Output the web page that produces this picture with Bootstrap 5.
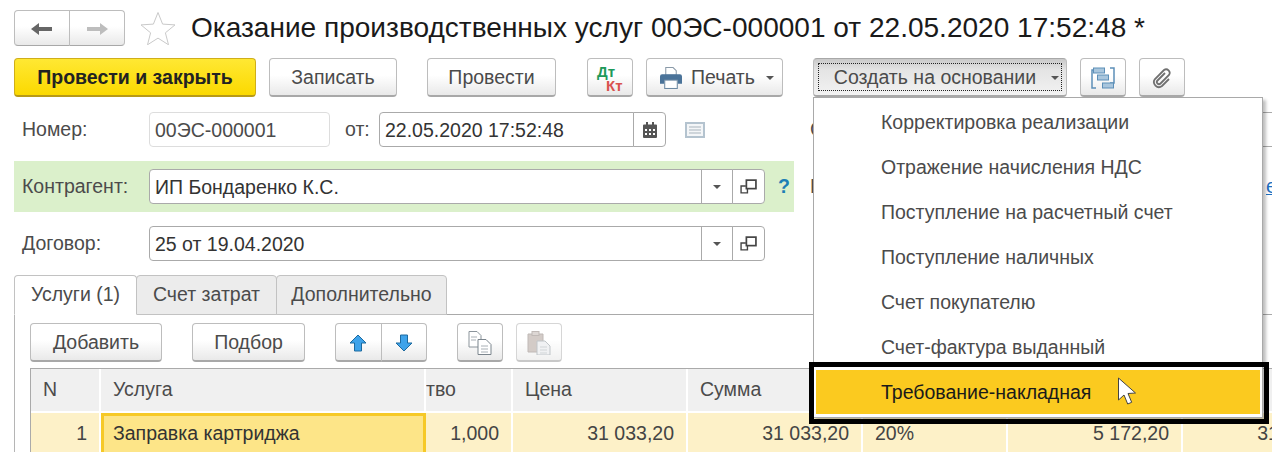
<!DOCTYPE html>
<html lang="ru">
<head>
  <meta charset="UTF-8" />
  <meta name="viewport" content="width=device-width, initial-scale=1.0" />
  <title>Оказание производственных услуг</title>
  <link rel="stylesheet" href="https://cdn.jsdelivr.net/npm/bootstrap@5.3.0/dist/css/bootstrap.min.css" />
  <style>
    html, body { height: 452px; overflow: hidden; }
    body {
      position: relative;
      width: 1272px;
      background: #fff;
      color: #4b4b4b;
      font-family: "Liberation Sans", Arial, sans-serif;
      font-size: 19.5px;
      padding: 10px 0 0 14px;
    }
    .ui-row { display: flex; flex: none; width: 1258px; overflow: hidden; }
    .title-row { height: 36px; align-items: center; margin-bottom: 12px; }
    .doc-title { color: #1a1a1a; font-size: 28.06px; margin: 0 0 0 15px; white-space: nowrap; font-weight: 400; line-height: 36px; }
    .star-icon { margin-left: 15px; }

    .ui-btn {
      --bs-btn-font-size: 19.5px;
      height: 39px;
      flex: none;
      display: inline-flex;
      align-items: center;
      justify-content: center;
      padding: 1px 0 0;
      color: #4b4b4b;
      background: linear-gradient(#fff 45%, #e9e9e9);
      border: 1px solid #bdbdbd;
      border-bottom: 2px solid #a8a8a8;
      border-radius: 4px;
      white-space: nowrap;
    }
    .ui-btn:hover { color: #4b4b4b; background: linear-gradient(#fff 45%, #e9e9e9); border-color: #bdbdbd; }
    .nav-btn { height: 36px; width: 56px; border-bottom-width: 1px; }
    .post-close {
      width: 242px;
      font-weight: 700;
      color: #222;
      background: linear-gradient(#ffe833, #fbd900);
      border-color: #cfae1a;
      border-bottom-color: #b89a16;
    }
    .post-close:hover { color: #222; background: linear-gradient(#ffe833, #fbd900); border-color: #cfae1a; }
    .cmd-row { height: 39px; margin-bottom: 15px; overflow: visible; }
    .w-save { width: 128px; margin-left: 13px; }
    .w-post { width: 129px; margin-left: 30px; }
    .w-dtkt { width: 46px; margin-left: 31px; }
    .w-print { width: 137px; margin-left: 13px; padding-left: 4px; }
    .w-create { width: 254px; margin-left: 30px; padding-left: 13px; position: relative; background: linear-gradient(#c9c9c9, #e4e4e4 30%, #f2f2f2); border-top-color: #a8a8a8; }
    .w-create::before { content: ""; position: absolute; inset: 4px; border: 1px dotted #222; }
    .w-create:hover { background: linear-gradient(#c9c9c9, #e4e4e4 30%, #f2f2f2); }
    .w-create .drop-caret { margin-left: 15px; }
    .w-icon { width: 46px; margin-left: 13px; }
    .drop-caret { display: inline-block; width: 0; height: 0; margin-left: 11px; border: 4px solid transparent; border-top: 4px solid #555; border-bottom: 0; }
    .dt-kt { position: relative; display: block; width: 26px; height: 26px; font-size: 15px; line-height: 13px; font-weight: 700; }
    .dt-kt b { position: absolute; font-weight: 700; }
    .dt-green { left: 0; top: 0; color: #1e9a5a; }
    .dt-red { left: 9px; top: 14px; color: #d9534f; }

    .form-row { height: 35px; align-items: center; margin-bottom: 14px; }
    .field-label { flex: none; width: 135px; padding-left: 8px; }
    .field-box {
      display: block;
      flex: none;
      height: 35px;
      padding: 0 5px;
      line-height: 35px;
      font-size: 19.5px;
      color: #333;
      background: #fff;
      border: 1px solid #aaa;
      border-radius: 4px;
      white-space: nowrap;
    }
    .field-light { border-color: #ddd; color: #4b4b4b; width: 181px; }
    .from-label { flex: none; width: 34px; margin-left: 15px; }
    .date-group { width: 287px; flex: none; }
    .ref-group { width: 616px; flex: none; }
    .field-group .field-box { flex: 1 1 auto; }
    .group-btn {
      height: 35px;
      flex: none;
      display: flex;
      align-items: center;
      justify-content: center;
      background: #fff;
      border: 1px solid #aaa;
      margin-left: -1px;
    }
    .w-31 { width: 32px; }
    .w-33 { width: 33px; }
    .group-btn:last-child { border-radius: 0 4px 4px 0; }
    .field-group .field-box { border-radius: 4px 0 0 4px; }
    .note-icon { margin-left: 19px; flex: none; }
    .side-label { flex: none; width: 15px; margin-left: 105px; }
    .side-box { flex: none; width: 500px; margin-left: 60px; }

    .green-row { height: 51px; width: 780px; flex: none; background: #dbf0cb; align-items: center; display: flex; }
    .partner-row { height: 51px; margin-bottom: 14px; align-items: center; }
    .help-mark { color: #1d7fb5; font-weight: 700; margin-left: 13px; }
    .side-label-2 { flex: none; width: 15px; margin-left: 16px; }
    .side-link { flex: none; margin-left: 441px; color: #1e6fc0; text-decoration: underline; }

    .doc-tabs { border: 0; height: 39px; flex-wrap: nowrap; }
    .doc-tabs .nav-link {
      height: 40px;
      padding: 0;
      display: flex;
      align-items: center;
      justify-content: center;
      color: #4b4b4b;
      background: #ececec;
      border: 1px solid #c2c2c2;
      border-radius: 4px 4px 0 0;
      margin: 0;
    }
    .doc-tabs .nav-link.active { background: #fff; color: #4b4b4b; border-color: #c2c2c2 #c2c2c2 #fff; position: relative; z-index: 2; }
    .tab-a { width: 123px; }
    .tab-b { width: 141px; margin-left: -1px !important; }
    .tab-c { width: 171px; margin-left: -1px !important; }
    .tab-panel { width: 1258px; height: 138px; border-left: 1px solid #b5b5b5; border-top: 1px solid #a9a9a9; padding: 8px 0 0 15px; overflow: hidden; }
    .tool-row { height: 39px; display: flex; margin-bottom: 6px; }
    .w-add { width: 132px; }
    .w-pick { width: 113px; margin-left: 30px; }
    .move-group { margin-left: 30px; flex: none; }
    .move-group .ui-btn { width: 46.500px; }
    .w-copy { width: 46px; margin-left: 30px; }
    .w-paste { width: 46px; margin-left: 13px; opacity: .62; }

    .rows-table { table-layout: fixed; width: 1327px; margin: 0; border-collapse: separate; border-spacing: 0; border-top: 1px solid #aaa; border-left: 1px solid #aaa; }
    .rows-table th, .rows-table td {
      padding: 0 12px;
      border: 0;
      border-right: 2px solid #fff;
      color: #4b4b4b;
      font-weight: 400;
      white-space: nowrap;
      overflow: hidden;
      vertical-align: middle;
    }
    .rows-table th { height: 44px; background: #f0f0f0; border-bottom: 2px solid #fff; }
    .rows-table td { height: 42px; background: #fdf1c8; color: #444; }
    .rows-table .qty-head { padding-left: 0; }
    .rows-table .cell-focus { background: #fde588; border: 3px solid #f6c927; padding: 0 9px; color: #333; }

    .base-menu {
      position: absolute;
      display: block;
      top: 97px;
      left: 813px;
      width: 450px;
      height: 321px;
      padding: 2px 0 0;
      margin: 0;
      border: 1px solid #a9a9a9;
      border-radius: 0;
      box-shadow: 3px 3px 3px rgba(0, 0, 0, .25);
      z-index: 10;
      font-size: 19.5px;
    }
    .base-menu .dropdown-item { height: 45px; line-height: 45px; padding: 0 0 0 67px; color: #4b4b4b; }
    .base-menu .dropdown-item.picked { background: #fbca1f; color: #1a1a1a; margin: 0 2px; width: auto; padding-left: 65px; height: 44px; line-height: 44px; }
    .picked-frame { position: absolute; left: -5px; top: 264px; width: 460px; height: 62px; border: 5px solid #000; pointer-events: none; }
    .mouse-arrow { position: absolute; left: 1117px; top: 377px; z-index: 12; }
  </style>
</head>
<body>
  <div class="ui-row title-row">
    <div class="btn-group flex-none">
      <button class="btn ui-btn nav-btn" type="button">
        <svg width="24" height="14" viewBox="0 0 24 14"><path d="M1 7 9 1v4h13v4H9v4z" fill="#666"/></svg>
      </button>
      <button class="btn ui-btn nav-btn" type="button">
        <svg width="24" height="14" viewBox="0 0 24 14"><path d="M23 7 15 1v4H2v4h13v4z" fill="#bdbdbd"/></svg>
      </button>
    </div>
    <svg class="star-icon flex-none" width="36" height="34" viewBox="0 0 36 34"><path d="M18 1.500l4.600 11.600 12.400.8-9.600 7.900 3.100 12-10.500-6.700-10.500 6.700 3.100-12L1 13.900l12.400-.8z" fill="#fff" stroke="#c9c9c9"/></svg>
    <h1 class="doc-title">Оказание производственных услуг 00ЭС-000001 от 22.05.2020 17:52:48 *</h1>
  </div>

  <div class="ui-row cmd-row">
    <button class="btn ui-btn post-close" type="button">Провести и закрыть</button>
    <button class="btn ui-btn w-save" type="button">Записать</button>
    <button class="btn ui-btn w-post" type="button">Провести</button>
    <button class="btn ui-btn w-dtkt" type="button">
      <span class="dt-kt"><b class="dt-green">Дт</b><b class="dt-red">Кт</b></span>
    </button>
    <button class="btn ui-btn w-print" type="button">
      <svg class="me-2" width="24" height="22" viewBox="0 0 22 21">
        <path d="M6 .5h7l3 3V8H6z" fill="#fff" stroke="#8a9aa8"/>
        <path d="M2.500 7h17A2 2 0 0 1 21.500 9v7h-4v-3h-13v3h-4V9a2 2 0 0 1 2-2z" fill="#4a7399"/>
        <rect x="5" y="12.500" width="12" height="8" fill="#fff" stroke="#6d8aa3"/>
      </svg>
      Печать<span class="drop-caret"></span>
    </button>
    <button class="btn ui-btn w-create" type="button">Создать на основании<span class="drop-caret"></span></button>
    <button class="btn ui-btn w-icon" type="button">
      <svg width="24" height="22" viewBox="0 0 24 22">
        <path d="M5 3H1v18h4M19 1h4v15h-4" fill="none" stroke="#5c8fb8" stroke-width="1.500"/>
        <rect x="2.500" y="1" width="11" height="5" fill="#a9c6dd" stroke="#5c8fb8"/>
        <rect x="6.500" y="8" width="11" height="5" fill="#a9c6dd" stroke="#5c8fb8"/>
        <rect x="11.500" y="16" width="11" height="5" fill="#a9c6dd" stroke="#5c8fb8"/>
      </svg>
    </button>
    <button class="btn ui-btn w-icon" type="button">
      <svg width="22" height="22" viewBox="0 0 22 22"><path d="M14 6 6.500 13.500a2 2 0 0 0 3 3L18 8a3.600 3.600 0 0 0-5-5L4 12a5 5 0 0 0 7 7l7-7" fill="none" stroke="#707070" stroke-width="1.800"/></svg>
    </button>
  </div>

  <div class="ui-row form-row">
    <div class="field-label">Номер:</div>
    <div class="field-box field-light">00ЭС-000001</div>
    <div class="from-label">от:</div>
    <div class="input-group field-group date-group flex-nowrap">
      <div class="field-box">22.05.2020 17:52:48</div>
      <span class="group-btn w-33">
        <svg width="14" height="16" viewBox="0 0 14 16">
          <path d="M1 2.500h12a1 1 0 0 1 1 1V15a1 1 0 0 1-1 1H1a1 1 0 0 1-1-1V3.500a1 1 0 0 1 1-1z" fill="#555"/>
          <rect x="3" y="0" width="2" height="4" fill="#555"/><rect x="9" y="0" width="2" height="4" fill="#555"/>
          <path d="M2 7h2v2H2zm4 0h2v2H6zm4 0h2v2h-2zM2 11h2v2H2zm4 0h2v2H6zm4 0h2v2h-2z" fill="#fff"/>
        </svg>
      </span>
    </div>
    <svg class="note-icon" width="20" height="16" viewBox="0 0 20 16">
      <rect x="1" y="1" width="18" height="14" fill="#f4f6f8" stroke="#b4c3cf" stroke-width="2"/>
      <path d="M4 5h12M4 8h12M4 11h12" stroke="#a9b4bd"/>
    </svg>
    <div class="side-label">С</div>
    <div class="field-box side-box">&nbsp;</div>
  </div>

  <div class="ui-row partner-row">
    <div class="green-row">
      <div class="field-label">Контрагент:</div>
      <div class="input-group field-group ref-group flex-nowrap">
        <div class="field-box">ИП Бондаренко К.С.</div>
        <span class="group-btn w-31"><span class="drop-caret ms-0"></span></span>
        <span class="group-btn w-33">
          <svg width="17" height="15" viewBox="0 0 16 14"><path d="M5.500 6.500H1V13h6V9" fill="none" stroke="#444" stroke-width="1.300"/><rect x="6" y="1" width="9" height="8" fill="none" stroke="#444" stroke-width="1.600"/></svg>
        </span>
      </div>
      <span class="help-mark">?</span>
    </div>
    <div class="side-label-2">Р</div>
    <a class="side-link" href="#">е</a>
  </div>

  <div class="ui-row form-row">
    <div class="field-label">Договор:</div>
    <div class="input-group field-group ref-group flex-nowrap">
      <div class="field-box">25 от 19.04.2020</div>
      <span class="group-btn w-31"><span class="drop-caret ms-0"></span></span>
      <span class="group-btn w-33">
        <svg width="17" height="15" viewBox="0 0 16 14"><path d="M5.500 6.500H1V13h6V9" fill="none" stroke="#444" stroke-width="1.300"/><rect x="6" y="1" width="9" height="8" fill="none" stroke="#444" stroke-width="1.600"/></svg>
      </span>
    </div>
  </div>

  <ul class="nav nav-tabs doc-tabs">
    <li class="nav-item"><a class="nav-link tab-a active" href="#">Услуги (1)</a></li>
    <li class="nav-item"><a class="nav-link tab-b" href="#">Счет затрат</a></li>
    <li class="nav-item"><a class="nav-link tab-c" href="#">Дополнительно</a></li>
  </ul>
  <div class="tab-panel">
    <div class="tool-row">
      <button class="btn ui-btn w-add" type="button">Добавить</button>
      <button class="btn ui-btn w-pick" type="button">Подбор</button>
      <div class="btn-group move-group">
        <button class="btn ui-btn" type="button">
          <svg width="18" height="18" viewBox="0 0 18 18"><path d="M9 1 17 9h-4.500v8h-7V9H1z" fill="#3ea3ea" stroke="#1c6a9f" stroke-linejoin="round"/></svg>
        </button>
        <button class="btn ui-btn" type="button">
          <svg width="18" height="18" viewBox="0 0 18 18"><path d="M9 17 1 9h4.500V1h7v8H17z" fill="#3ea3ea" stroke="#1c6a9f" stroke-linejoin="round"/></svg>
        </button>
      </div>
      <button class="btn ui-btn w-copy" type="button">
        <svg width="24" height="24" viewBox="0 0 24 24">
          <path d="M1 .5h8l4 4V16H1z" fill="#fff" stroke="#8b949b"/>
          <path d="M10 8.500h8l5 5v10H10z" fill="#fff" stroke="#7b858d"/>
          <path d="M3 6h6M3 9h5M13 15h7M13 18h7M13 21h7" stroke="#a9b0b6"/>
        </svg>
      </button>
      <button class="btn ui-btn w-paste" type="button">
        <svg width="24" height="24" viewBox="0 0 24 24">
          <path d="M1 3h15v18H1z" fill="#b9aca6" stroke="#9a8f8a"/>
          <rect x="5" y="0.500" width="7" height="4" fill="#c9c0bb" stroke="#9a8f8a"/>
          <path d="M10 10h8l5 5v9H10z" fill="#e8eaec" stroke="#9aa2a8"/>
          <path d="M13 16h7M13 19h7M13 22h7" stroke="#b5bbc0"/>
        </svg>
      </button>
    </div>
    <table class="table rows-table">
      <colgroup>
        <col style="width:70px"><col style="width:325px"><col style="width:87px"><col style="width:175px"><col style="width:175px"><col style="width:145px"><col style="width:175px"><col style="width:175px">
      </colgroup>
      <thead>
        <tr><th>N</th><th>Услуга</th><th class="qty-head">тво</th><th>Цена</th><th>Сумма</th><th></th><th></th><th></th></tr>
      </thead>
      <tbody>
        <tr>
          <td class="text-end">1</td>
          <td class="cell-focus">Заправка картриджа</td>
          <td class="text-end">1,000</td>
          <td class="text-end">31 033,20</td>
          <td class="text-end">31 033,20</td>
          <td>20%</td>
          <td class="text-end">5 172,20</td>
          <td class="text-end">31 033,20</td>
        </tr>
      </tbody>
    </table>
  </div>

  <ul class="dropdown-menu show base-menu">
    <li><a class="dropdown-item" href="#">Корректировка реализации</a></li>
    <li><a class="dropdown-item" href="#">Отражение начисления НДС</a></li>
    <li><a class="dropdown-item" href="#">Поступление на расчетный счет</a></li>
    <li><a class="dropdown-item" href="#">Поступление наличных</a></li>
    <li><a class="dropdown-item" href="#">Счет покупателю</a></li>
    <li><a class="dropdown-item" href="#">Счет-фактура выданный</a></li>
    <li><a class="dropdown-item picked" href="#">Требование-накладная</a></li>
    <li class="picked-frame"></li>
  </ul>
  <svg class="mouse-arrow" width="20" height="29" viewBox="0 0 20 29">
    <path d="M1.500 1v22l5.500-5 3.700 9 4-1.700-3.700-8.800 7.500-.5z" fill="#fff" stroke="#444"/>
  </svg>

  <script src="https://cdn.jsdelivr.net/npm/bootstrap@5.3.0/dist/js/bootstrap.bundle.min.js"></script>
</body>
</html>
